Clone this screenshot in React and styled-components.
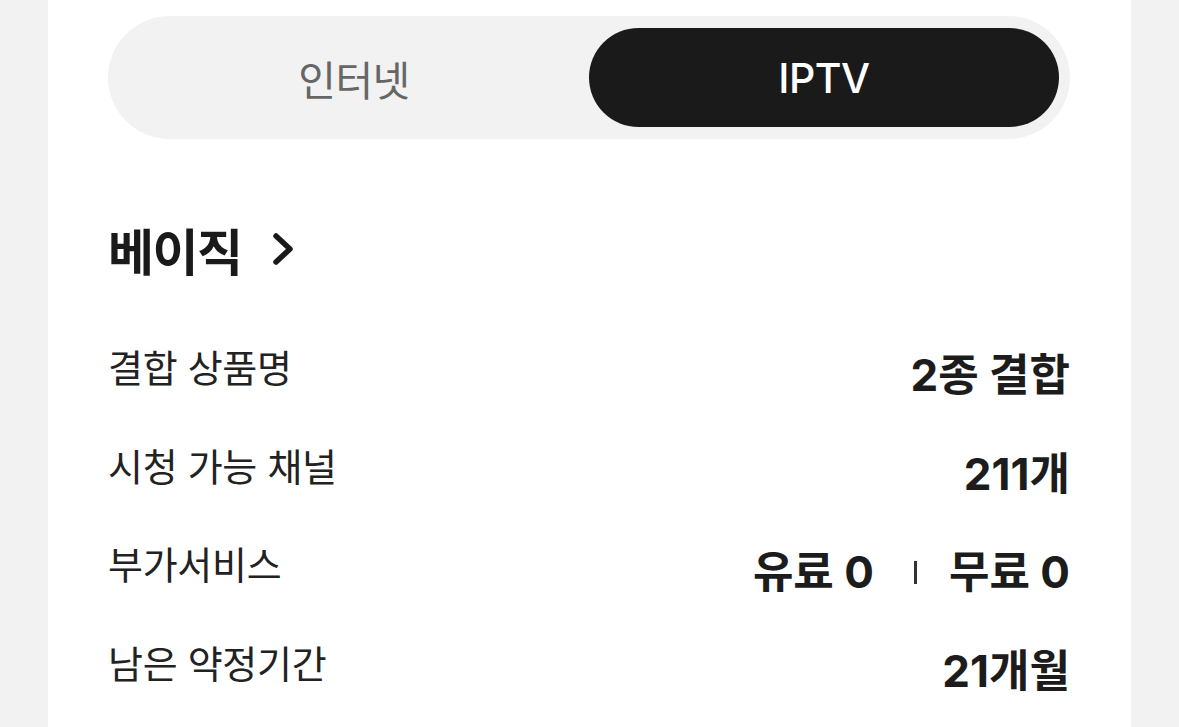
import React, { useState } from "react";
import styled, { createGlobalStyle } from "styled-components";

const Global = createGlobalStyle`
  html, body {
    margin: 0;
    padding: 0;
    background: #f2f2f2;
    overflow: hidden;
  }
  body {
    font-family: Inter, "Noto Sans CJK KR", "Noto Sans", sans-serif;
    -webkit-font-smoothing: antialiased;
  }
`;

const Page = styled.div`
  height: 727px;
  padding: 0 48px;
  box-sizing: border-box;
`;

const Card = styled.section`
  background: #ffffff;
  height: 100%;
  padding: 16px 61px 0 60px;
  box-sizing: border-box;
`;

const Toggle = styled.div`
  display: grid;
  grid-template-columns: 1fr 1fr;
  height: 123px;
  box-sizing: border-box;
  padding: 12px 11px;
  background: #f2f2f2;
  border-radius: 62px;
`;

const Tab = styled.button`
  border: 0;
  border-radius: 50px;
  background: ${(p) => (p.$active ? "#1a1a1a" : "transparent")};
  color: ${(p) => (p.$active ? "#ffffff" : "#666666")};
  font-family: inherit;
  font-size: 41px;
  font-weight: ${(p) => (p.$active ? 500 : 400)};
  letter-spacing: -0.5px;
  cursor: pointer;
  padding: 0;
`;

const TitleRow = styled.h2`
  display: flex;
  align-items: center;
  gap: 27px;
  margin: 80px 0 0;
  height: 60px;
  font-size: 50px;
  font-weight: 700;
  color: #1a1a1a;
  letter-spacing: -1.5px;
`;

const List = styled.dl`
  margin: 60px 0 0;
  display: flex;
  flex-direction: column;
`;

const Row = styled.div`
  display: flex;
  justify-content: space-between;
  align-items: flex-start;
  height: 98.5px;
`;

const Label = styled.dt`
  font-size: 38px;
  line-height: 58px;
  font-weight: 400;
  color: #222222;
  letter-spacing: -0.3px;
`;

const Value = styled.dd`
  margin: 0;
  display: flex;
  align-items: center;
  font-size: 44px;
  line-height: 72px;
  font-weight: 700;
  color: #1c1c1c;
  letter-spacing: 0;
`;

const Divider = styled.span`
  display: inline-block;
  width: 3px;
  height: 23px;
  margin: 0 32px 0 40px;
  background: #333;
`;

const Chevron = () => (
  <svg width="30" height="40" viewBox="0 0 30 40" aria-hidden="true">
    <path
      d="M7 7 L21 20 L7 33"
      fill="none"
      stroke="#1a1a1a"
      strokeWidth="5.5"
      strokeLinecap="round"
      strokeLinejoin="round"
    />
  </svg>
);

export default function App() {
  const [tab, setTab] = useState("iptv");
  return (
    <>
      <Global />
      <Page>
        <Card>
          <Toggle>
            <Tab $active={tab === "internet"} onClick={() => setTab("internet")}>
              인터넷
            </Tab>
            <Tab $active={tab === "iptv"} onClick={() => setTab("iptv")}>
              IPTV
            </Tab>
          </Toggle>
          <TitleRow>
            베이직
            <Chevron />
          </TitleRow>
          <List>
            <Row>
              <Label>결합 상품명</Label>
              <Value>2종 결합</Value>
            </Row>
            <Row>
              <Label>시청 가능 채널</Label>
              <Value>211개</Value>
            </Row>
            <Row>
              <Label>부가서비스</Label>
              <Value>
                <span>유료 0</span>
                <Divider />
                <span>무료 0</span>
              </Value>
            </Row>
            <Row>
              <Label>남은 약정기간</Label>
              <Value>21개월</Value>
            </Row>
          </List>
        </Card>
      </Page>
    </>
  );
}
